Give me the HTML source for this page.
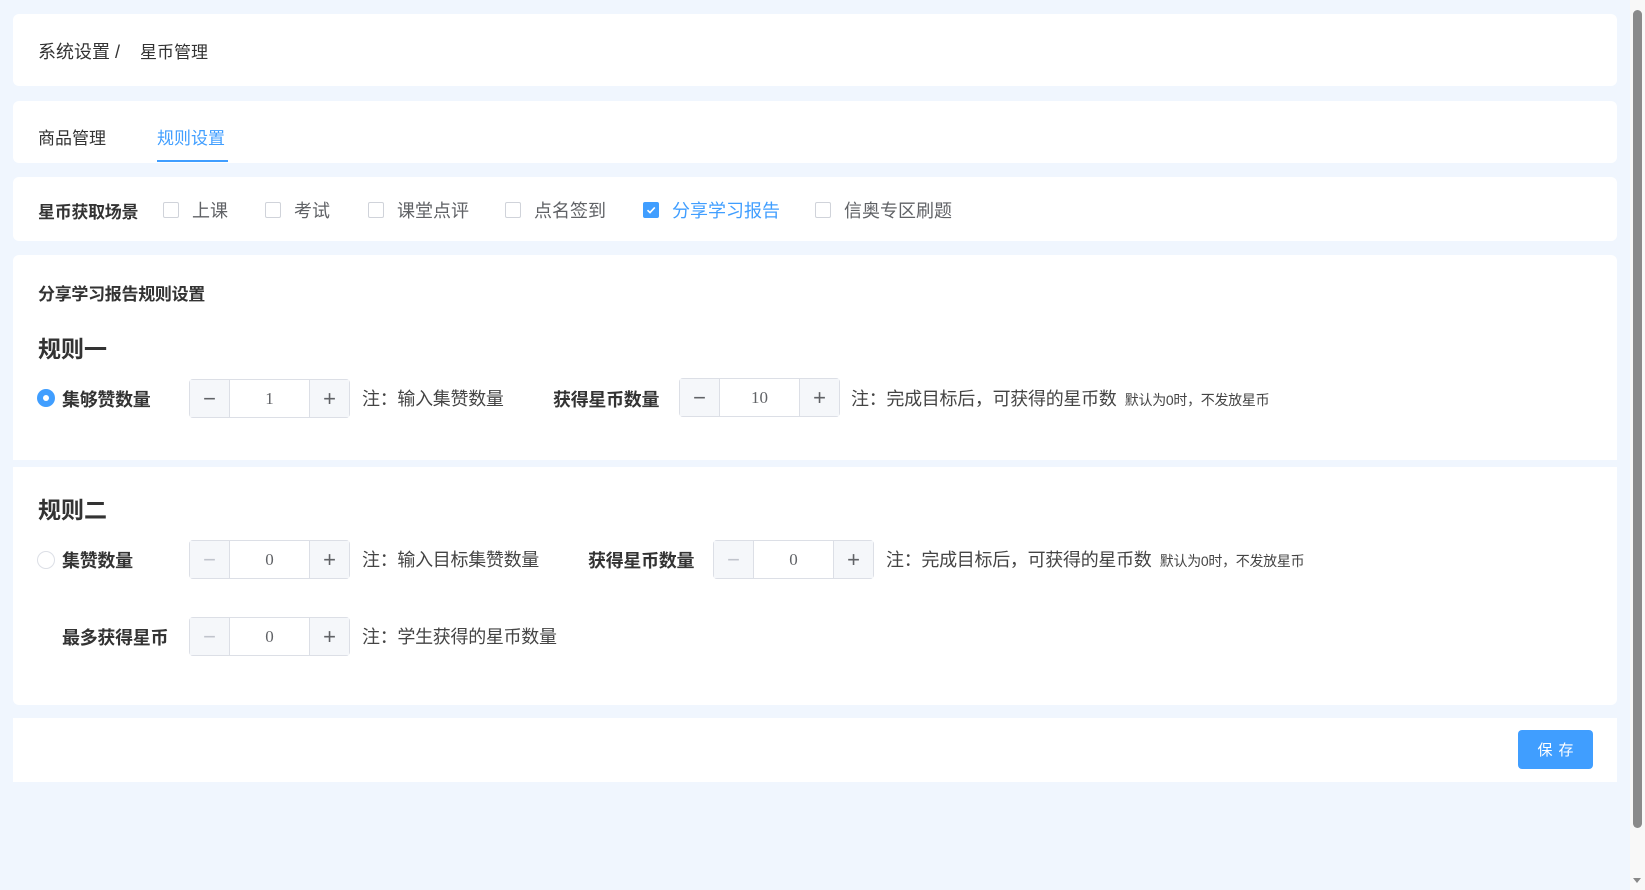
<!DOCTYPE html>
<html><head><meta charset="utf-8"><style>
*{box-sizing:border-box;margin:0;padding:0}
body{width:1645px;height:890px;background:#f0f6fe;font-family:"Liberation Sans","Noto Sans CJK SC",sans-serif;color:#333;position:relative;overflow:hidden;font-size:17px}
.card{position:absolute;left:13px;width:1604px;background:#fff;border-radius:6px}
.abs{position:absolute;white-space:nowrap}
.b{font-weight:bold}
.cb{position:absolute;width:16px;height:16px;border:1px solid #d0d3da;border-radius:2px;background:#fff}
.cbl{color:#606266}
.num{position:absolute;width:161px;height:39px;border:1px solid #dcdfe6;border-radius:4px;background:#fff;display:flex}
.num span{width:40px;background:#f5f7fa;color:#606266;display:flex;align-items:center;justify-content:center;font-size:22px;font-weight:300}
.num span.l{border-right:1px solid #dcdfe6}
.num span.r{border-left:1px solid #dcdfe6}
.num span.dis{color:#c0c4cc}
.num i{flex:1;font-style:normal;display:flex;align-items:center;justify-content:center;color:#606266;font-family:"Liberation Serif",serif;font-size:17px}
.note{color:#444}
.sm{font-size:14px}
</style></head><body>
<div class="card" style="top:14px;height:72px">
 <div class="abs" style="left:25px;top:24px;font-size:18px">系统设置 / &nbsp;&nbsp;&nbsp;<span style="font-size:17px">星币管理</span></div>
</div>
<div class="card" style="top:101px;height:62px">
 <div class="abs" style="left:25px;top:23px">商品管理</div>
 <div class="abs" style="left:144px;top:23px;color:#409eff">规则设置</div>
 <div class="abs" style="left:144px;top:59px;width:71px;height:2px;background:#409eff"></div>
</div>
<div class="card" style="top:177px;height:64px">
 <div class="abs b" style="left:25px;top:21px;letter-spacing:-0.3px">星币获取场景</div>
 <div class="cb" style="left:150px;top:25px"></div><div class="abs cbl" style="left:179px;top:20px;font-size:18px">上课</div>
 <div class="cb" style="left:252px;top:25px"></div><div class="abs cbl" style="left:281px;top:20px;font-size:18px">考试</div>
 <div class="cb" style="left:355px;top:25px"></div><div class="abs cbl" style="left:384px;top:20px;font-size:18px">课堂点评</div>
 <div class="cb" style="left:492px;top:25px"></div><div class="abs cbl" style="left:521px;top:20px;font-size:18px">点名签到</div>
 <div class="cb" style="left:630px;top:25px;background:#409eff;border-color:#409eff"><svg width="14" height="14" viewBox="0 0 14 14" style="position:absolute;left:0;top:0"><path d="M3.5 7.2 L6 9.6 L10.8 4.4" stroke="#fff" stroke-width="1.6" fill="none"/></svg></div>
 <div class="abs" style="left:659px;top:20px;font-size:18px;color:#409eff">分享学习报告</div>
 <div class="cb" style="left:802px;top:25px"></div><div class="abs cbl" style="left:831px;top:20px;font-size:18px">信奥专区刷题</div>
</div>
<div class="card" style="top:255px;height:205px;border-radius:6px 6px 0 0">
 <div class="abs b" style="left:25px;top:25px;letter-spacing:-0.3px">分享学习报告规则设置</div>
 <div class="abs b" style="left:25px;top:75px;font-size:23px">规则一</div>
 <div class="abs" style="left:24px;top:134px;width:18px;height:18px;border-radius:50%;background:#409eff"><div style="position:absolute;left:6px;top:6px;width:6px;height:6px;border-radius:50%;background:#fff"></div></div>
 <div class="abs b" style="left:49px;top:131px;font-size:18px;letter-spacing:-0.3px">集够赞数量</div>
 <div class="num" style="left:176px;top:124px"><span class="l">−</span><i>1</i><span class="r">+</span></div>
 <div class="abs note" style="left:349px;top:130px;font-size:18px;letter-spacing:-0.3px">注：输入集赞数量</div>
 <div class="abs b" style="left:540px;top:131px;font-size:18px;letter-spacing:-0.3px">获得星币数量</div>
 <div class="num" style="left:666px;top:123px"><span class="l">−</span><i>10</i><span class="r">+</span></div>
 <div class="abs note" style="left:838px;top:130px;font-size:18px;letter-spacing:-0.3px">注：完成目标后，可获得的星币数 <span class="sm">&nbsp;默认为0时，不发放星币</span></div>
</div>
<div class="card" style="top:467px;height:238px;border-radius:0 0 6px 6px">
 <div class="abs b" style="left:25px;top:24px;font-size:23px">规则二</div>
 <div class="abs" style="left:24px;top:84px;width:18px;height:18px;border-radius:50%;border:1px solid #dcdfe6"></div>
 <div class="abs b" style="left:49px;top:80px;font-size:18px;letter-spacing:-0.3px">集赞数量</div>
 <div class="num" style="left:176px;top:73px"><span class="l dis">−</span><i>0</i><span class="r">+</span></div>
 <div class="abs note" style="left:349px;top:79px;font-size:18px;letter-spacing:-0.3px">注：输入目标集赞数量</div>
 <div class="abs b" style="left:575px;top:80px;font-size:18px;letter-spacing:-0.3px">获得星币数量</div>
 <div class="num" style="left:700px;top:73px"><span class="l dis">−</span><i>0</i><span class="r">+</span></div>
 <div class="abs note" style="left:873px;top:79px;font-size:18px;letter-spacing:-0.3px">注：完成目标后，可获得的星币数 <span class="sm">&nbsp;默认为0时，不发放星币</span></div>
 <div class="abs b" style="left:49px;top:157px;font-size:18px;letter-spacing:-0.3px">最多获得星币</div>
 <div class="num" style="left:176px;top:150px"><span class="l dis">−</span><i>0</i><span class="r">+</span></div>
 <div class="abs note" style="left:349px;top:156px;font-size:18px;letter-spacing:-0.3px">注：学生获得的星币数量</div>
</div>
<div class="card" style="top:718px;height:64px;border-radius:0">
 <div class="abs" style="left:1505px;top:12px;width:75px;height:39px;background:#409eff;border-radius:4px;color:#fff;font-size:15px;display:flex;align-items:center;justify-content:center;letter-spacing:6px;padding-left:6px">保存</div>
</div>
<div class="abs" style="left:1630px;top:0;width:15px;height:890px;background:#f8f8f8"></div>
<div class="abs" style="left:1633px;top:10px;width:9px;height:818px;background:#8a8a8a;border-radius:5px"></div>
<div class="abs" style="left:1633px;top:878px;width:0;height:0;border-left:4px solid transparent;border-right:4px solid transparent;border-top:5px solid #888"></div>
</body></html>
